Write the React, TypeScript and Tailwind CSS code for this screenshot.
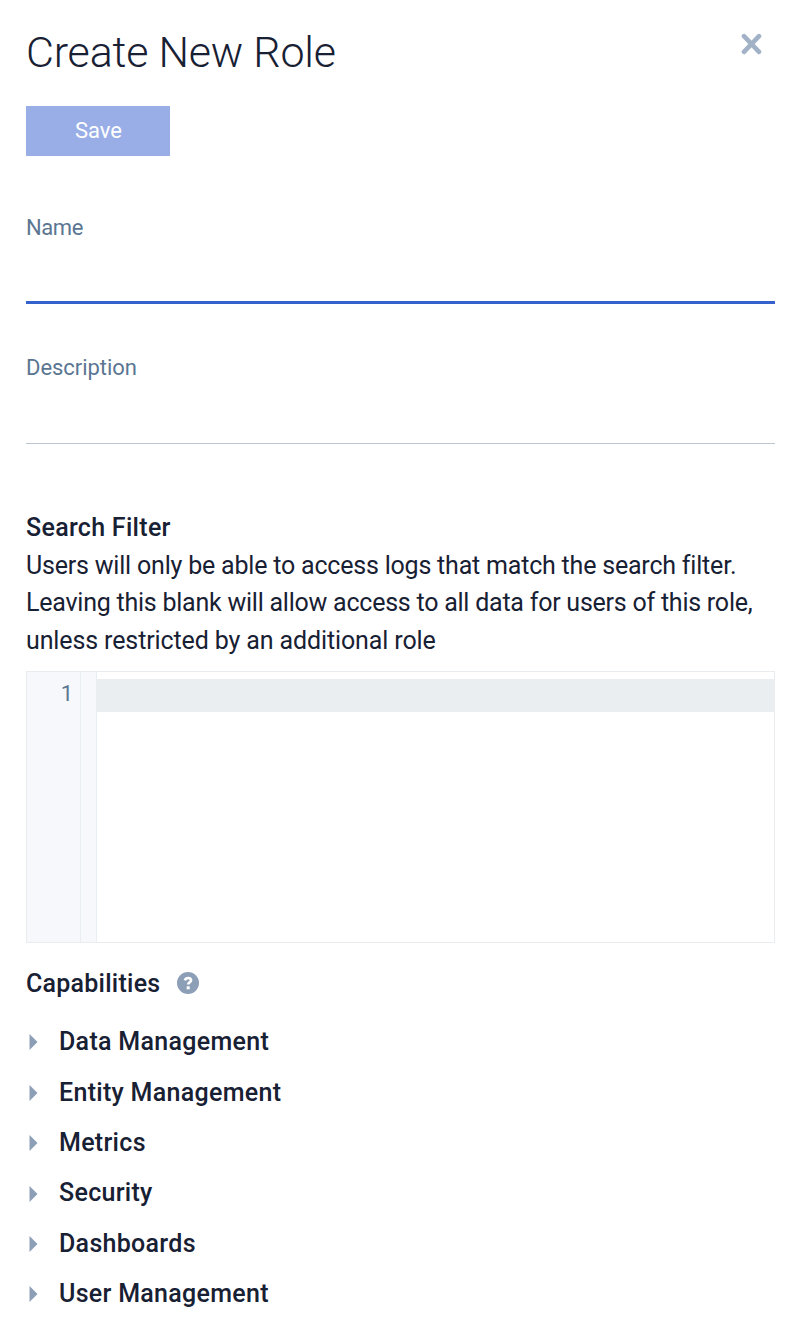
import React, { useState } from "react";

const capabilities = [
  "Data Management",
  "Entity Management",
  "Metrics",
  "Security",
  "Dashboards",
  "User Management",
];

function Field({ id, label, labelClass, lineClass }: { id: string; label: string; labelClass: string; lineClass: string }) {
  return (
    <div className="flex flex-col">
      <label htmlFor={id} className={`text-[22px] leading-[30px] text-[#5b7692] ${labelClass}`}>
        {label}
      </label>
      <input id={id} className={`w-full outline-none text-[22px] ${lineClass}`} />
    </div>
  );
}

export default function App() {
  const [open, setOpen] = useState<string | null>(null);

  return (
    <main className="flex h-[1330px] w-[804px] flex-col overflow-hidden bg-white pr-[29px] pl-[26px] pt-[22px] font-['Roboto','Liberation_Sans',sans-serif] text-[#182033]">
      <header className="flex items-start justify-between">
        <h1 className="text-[43px] leading-[60px] font-light tracking-[-0.2px]">Create New Role</h1>
        <button aria-label="Close" className="mt-[10.5px] mr-[13px]">
          <svg width="21" height="22" viewBox="0 0 21 22" className="block">
            <path d="M3 3.2L18 18.8M18 3.2L3 18.8" stroke="#a1b2c7" strokeWidth="4.6" strokeLinecap="round" />
          </svg>
        </button>
      </header>

      <button className="mt-6 h-[50px] w-36 bg-[#99aee6] pb-0.5 pl-px text-[22px] text-white">Save</button>

      <div className="mt-[57px] flex flex-col gap-[49px]">
        <Field id="name" label="Name" labelClass="tracking-[-0.4px]" lineClass="h-[61px] border-b-3 border-[#3461cb]" />
        <Field id="description" label="Description" labelClass="tracking-[-0.04px]" lineClass="h-[61px] border-b border-[#bdc6d3]" />
      </div>

      <section className="mt-[65px] text-[25px] leading-[37.7px]">
        <h2 className="font-medium tracking-[0.3px]">Search Filter</h2>
        <p className="tracking-[-0.2px]">
          Users will only be able to access logs that match the search filter.
          <br />
          <span className="tracking-[-0.235px]">Leaving this blank will allow access to all data for users of this role,</span>
          <br />
          <span className="tracking-[-0.12px]">unless restricted by an additional role</span>
        </p>
      </section>

      <div className="mt-[11px] flex h-[272px] shrink-0 border border-[#e9edf0]">
        <div className="w-[54px] border-r border-[#e9eef2] bg-[#f6f8fb] pt-1.5 pr-[7px] text-right text-[22px] leading-[31px] text-[#5b7692]">
          1
        </div>
        <div className="w-4 border-r border-[#e9eef2] bg-[#f6f8fb]" />
        <div className="flex-1 pt-[7px]">
          <div className="h-[33px] bg-[#eaeef1]" />
        </div>
      </div>

      <div className="mt-[21px] flex h-[38px] items-center gap-[16.5px]">
        <h2 className="mt-0.5 text-[25px] font-medium tracking-[0.25px]">Capabilities</h2>
        <svg width="22" height="22" viewBox="0 0 22 22" fill="none" className="mt-px">
          <circle cx="11" cy="11" r="11" fill="#8d9fb6" />
          <path d="M7.9 8.4C8.5 6.7 9.6 6 11.1 6C12.9 6 14 7 14 8.4C14 10.3 11.2 10.2 11.2 12.6" stroke="white" strokeWidth="2.7" />
          <rect x="9.7" y="14.3" width="3" height="3" fill="white" />
        </svg>
      </div>

      <ul className="mt-[15px] flex flex-col">
        {capabilities.map((name) => (
          <li key={name} className="h-[50.35px]">
            <button
              aria-expanded={open === name}
              onClick={() => setOpen(open === name ? null : name)}
              className="flex h-full items-center gap-[21px] pl-[3px] text-[25px] font-medium tracking-[0.3px]"
            >
              <svg width="9" height="16" viewBox="0 0 9 16" className="mt-px">
                <path d="M0.5 0L8.5 8L0.5 16Z" fill="#8d9fb6" />
              </svg>
              {name}
            </button>
          </li>
        ))}
      </ul>
    </main>
  );
}
